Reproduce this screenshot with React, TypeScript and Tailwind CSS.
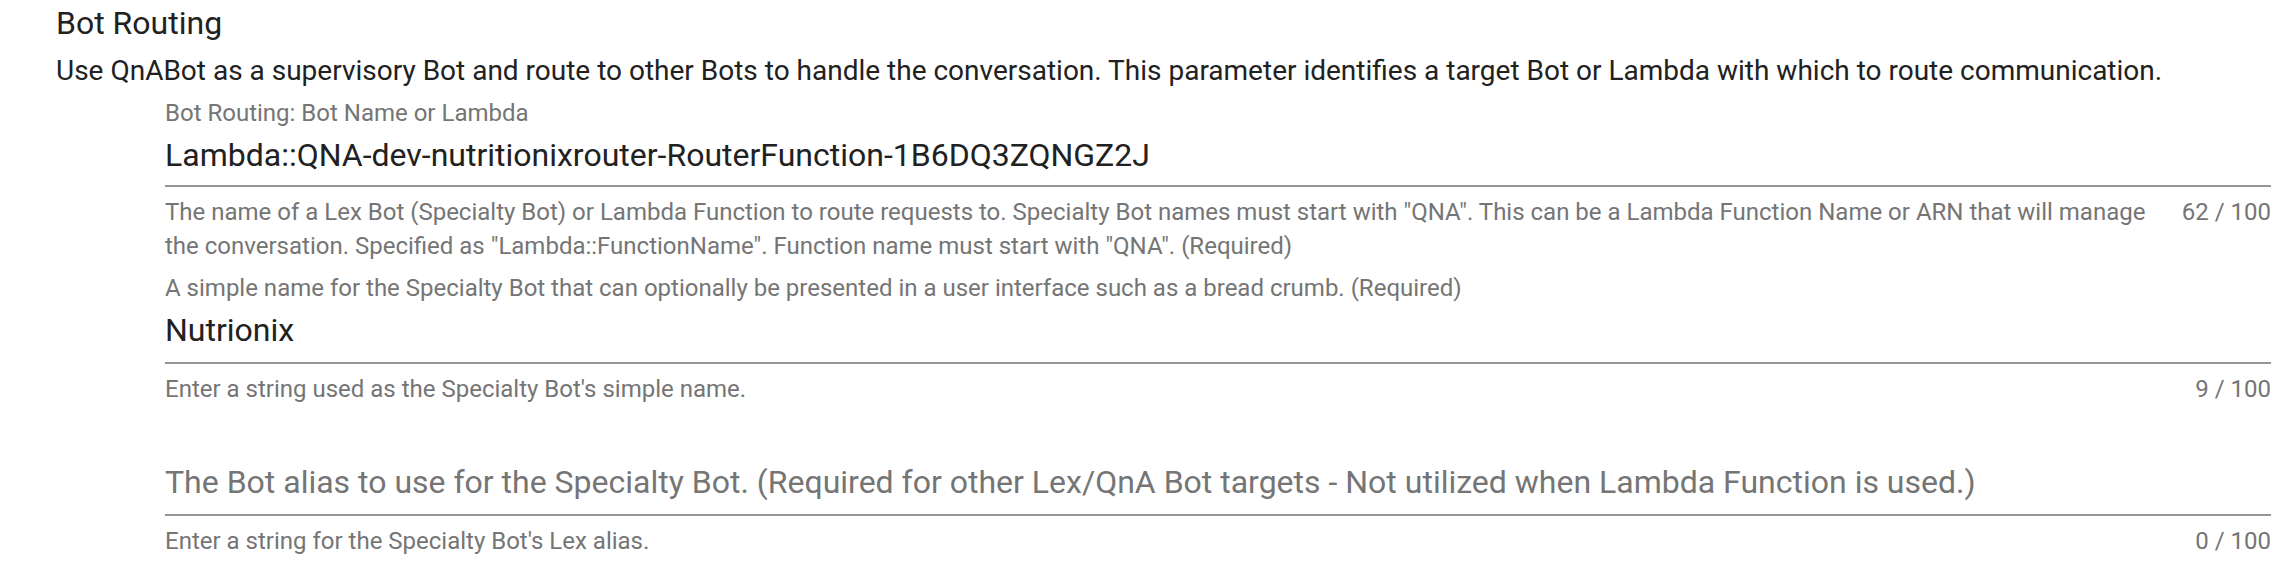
import React from 'react';

interface FieldProps {
  label: string;
  value: string;
  hint: string;
  max: number;
  className?: string;
  tight?: boolean;
}

const TextField: React.FC<FieldProps> = ({ label, value, hint, max, className, tight }) => {
  const floated = value.length > 0;
  return (
    <div className={className}>
      <div className="h-[38px] text-[24px] leading-[38px] text-[#757575] whitespace-nowrap">
        {floated ? label : ''}
      </div>
      <div className={`border-b-2 border-[#949494] ${tight ? 'pb-[7px]' : 'pb-[9px]'}`}>
        <div
          className={`text-[32px] leading-[46px] whitespace-nowrap ${
            floated ? 'text-[#212121]' : 'text-[#757575]'
          }`}
        >
          {floated ? value : label}
        </div>
      </div>
      <div className="flex items-start gap-[30px] pt-[8px] text-[24px] leading-[34px] text-[#757575]">
        <div className="flex-1">{hint}</div>
        <div className="whitespace-nowrap">
          {value.length} / {max}
        </div>
      </div>
    </div>
  );
};

export default function App() {
  return (
    <div className="bg-white w-[2290px] h-[564px] overflow-hidden pl-[56px] pr-[19px] font-['Roboto',sans-serif]">
      <div className="text-[32px] leading-[46px] text-[#212121]">Bot Routing</div>
      <div className="mt-[2px] text-[28px] leading-[46px] text-[#212121] whitespace-nowrap">
        Use QnABot as a supervisory Bot and route to other Bots to handle the conversation. This parameter
        identifies a target Bot or Lambda with which to route communication.
      </div>

      <div className="ml-[109px]">
        <TextField
          tight
          label="Bot Routing: Bot Name or Lambda"
          value="Lambda::QNA-dev-nutritionixrouter-RouterFunction-1B6DQ3ZQNGZ2J"
          hint={
            'The name of a Lex Bot (Specialty Bot) or Lambda Function to route requests to. Specialty Bot names must start with "QNA". This can be a Lambda Function Name or ARN that will manage the conversation. Specified as "Lambda::FunctionName". Function name must start with "QNA". (Required)'
          }
          max={100}
        />
        <TextField
          className="mt-[6px]"
          label="A simple name for the Specialty Bot that can optionally be presented in a user interface such as a bread crumb. (Required)"
          value="Nutrionix"
          hint="Enter a string used as the Specialty Bot's simple name."
          max={100}
        />
        <TextField
          className="mt-[15px]"
          label="The Bot alias to use for the Specialty Bot. (Required for other Lex/QnA Bot targets - Not utilized when Lambda Function is used.)"
          value=""
          hint="Enter a string for the Specialty Bot's Lex alias."
          max={100}
        />
      </div>
    </div>
  );
}
